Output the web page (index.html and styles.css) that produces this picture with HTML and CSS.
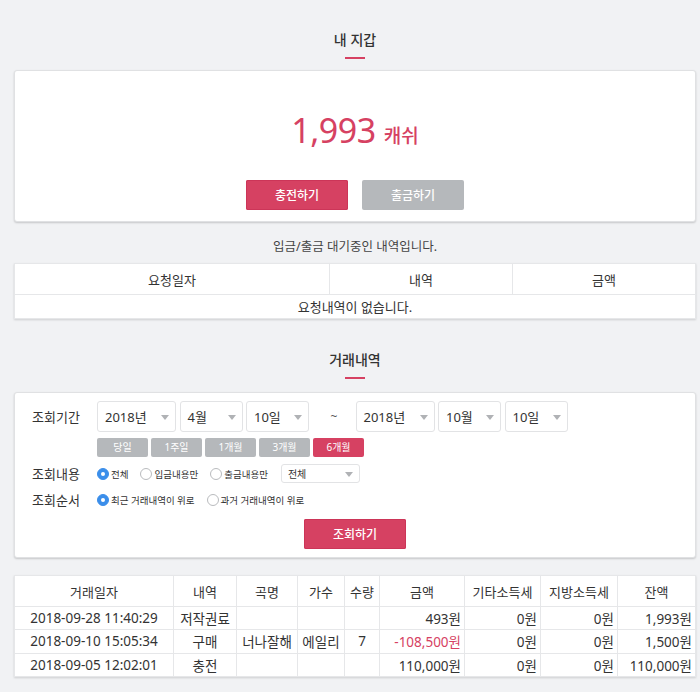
FILE: index.html
```html
<!DOCTYPE html>
<html lang="ko">
<head>
<meta charset="utf-8">
<title>내 지갑</title>
<link rel="stylesheet" href="styles.css">
</head>
<body>
<div class="page">
  <div class="sec-head first">
    <h2 class="sec-title">내 지갑</h2>
    <div class="sec-bar"></div>
  </div>
  <div class="card wallet">
    <div class="amount"><span class="num">1,993</span><span class="unit">캐쉬</span></div>
    <div class="btns">
      <button class="btn btn-pink">충전하기</button>
      <button class="btn btn-gray">출금하기</button>
    </div>
  </div>

  <p class="notice">입금/출금 대기중인 내역입니다.</p>
  <table class="tbl tbl-pending">
    <colgroup><col class="c-req"><col class="c-desc"><col></colgroup>
    <thead><tr><th>요청일자</th><th>내역</th><th>금액</th></tr></thead>
    <tbody><tr><td colspan="3">요청내역이 없습니다.</td></tr></tbody>
  </table>

  <div class="sec-head second">
    <h2 class="sec-title">거래내역</h2>
    <div class="sec-bar"></div>
  </div>
  <div class="card search">
    <div class="row row-period">
      <span class="lbl">조회기간</span>
      <div class="sel w79"><span>2018년</span><i class="caret"></i></div>
      <div class="sel w63"><span>4월</span><i class="caret"></i></div>
      <div class="sel w63"><span>10일</span><i class="caret"></i></div>
      <span class="tilde">~</span>
      <div class="sel w79"><span>2018년</span><i class="caret"></i></div>
      <div class="sel w63"><span>10월</span><i class="caret"></i></div>
      <div class="sel w63"><span>10일</span><i class="caret"></i></div>
    </div>
    <div class="row row-quick">
      <span class="qbtn">당일</span>
      <span class="qbtn">1주일</span>
      <span class="qbtn">1개월</span>
      <span class="qbtn">3개월</span>
      <span class="qbtn on">6개월</span>
    </div>
    <div class="row row-opt">
      <span class="lbl">조회내용</span>
      <label class="radio"><i class="dot on"></i>전체</label>
      <label class="radio"><i class="dot"></i>입금내용만</label>
      <label class="radio"><i class="dot"></i>출금내용만</label>
      <div class="sel sm w79"><span>전체</span><i class="caret"></i></div>
    </div>
    <div class="row row-opt">
      <span class="lbl">조회순서</span>
      <label class="radio"><i class="dot on"></i>최근 거래내역이 위로</label>
      <label class="radio"><i class="dot"></i>과거 거래내역이 위로</label>
    </div>
    <div class="row row-submit">
      <button class="btn btn-pink">조회하기</button>
    </div>
  </div>

  <table class="tbl tbl-hist">
    <colgroup>
      <col class="h1"><col class="h2"><col class="h3"><col class="h4"><col class="h5">
      <col class="h6"><col class="h7"><col class="h8"><col>
    </colgroup>
    <thead>
      <tr><th>거래일자</th><th>내역</th><th>곡명</th><th>가수</th><th>수량</th><th>금액</th><th>기타소득세</th><th>지방소득세</th><th>잔액</th></tr>
    </thead>
    <tbody>
      <tr><td>2018-09-28 11:40:29</td><td>저작권료</td><td></td><td></td><td></td><td class="r">493원</td><td class="r">0원</td><td class="r">0원</td><td class="r">1,993원</td></tr>
      <tr><td>2018-09-10 15:05:34</td><td>구매</td><td>너나잘해</td><td>에일리</td><td>7</td><td class="r neg">-108,500원</td><td class="r">0원</td><td class="r">0원</td><td class="r">1,500원</td></tr>
      <tr><td>2018-09-05 12:02:01</td><td>충전</td><td></td><td></td><td></td><td class="r">110,000원</td><td class="r">0원</td><td class="r">0원</td><td class="r">110,000원</td></tr>
    </tbody>
  </table>
</div>
</body>
</html>
```
FILE: styles.css
```css
* { box-sizing: border-box; }
html, body { margin: 0; padding: 0; }
body {
  background: #f1f2f4;
  font-family: "Noto Sans", "Noto Sans CJK KR", sans-serif;
  color: #333;
  font-size: 13px;
}
.page { margin: 0 4px 0 14px; padding-bottom: 20px; }

.sec-head { text-align: center; }
.sec-head.first { padding-top: 30px; }
.sec-head.second { padding-top: 31px; }
.sec-title {
  margin: 0;
  font-size: 14px;
  line-height: 20px;
  font-weight: 500;
  color: #333;
}
.sec-bar {
  width: 20px;
  height: 2px;
  background: #d64162;
  margin: 7px auto 11px;
}
.second .sec-bar { margin-bottom: 13px; }

.card {
  background: #fff;
  border: 1px solid #e0e1e3;
  border-radius: 3px;
  box-shadow: 0 1px 2px rgba(0,0,0,0.18);
}
.wallet { padding: 39px 0 11px; text-align: center; }
.amount {
  height: 40px;
  line-height: 40px;
  color: #d64162;
}
.amount .num { font-size: 34px; letter-spacing: -0.5px; }
.amount .unit { font-size: 19px; font-weight: 500; margin-left: 8px; }
.btns { margin-top: 30px; display: flex; justify-content: center; gap: 14px; }
.btn {
  width: 102px;
  height: 30px;
  border: 0;
  border-radius: 2px;
  color: #fff;
  font-family: inherit;
  font-size: 12px;
  font-weight: 500;
  padding: 0;
  cursor: pointer;
}
.btn-pink { background: #d64162; box-shadow: inset 0 0 0 1px #cc3558; }
.btn-gray { background: #b5b8bb; }

.notice {
  margin: 15px 0 6px;
  line-height: 20px;
  text-align: center;
  font-size: 12.5px;
  color: #444;
}

.tbl {
  width: 100%;
  border-collapse: collapse;
  background: #fff;
  box-shadow: 0 1px 2px rgba(0,0,0,0.15);
  table-layout: fixed;
}
.tbl th, .tbl td {
  border: 1px solid #e6e7e9;
  padding: 0 3px;
  text-align: center;
  font-weight: 400;
  white-space: nowrap;
  overflow: hidden;
}
.tbl th { height: 31px; font-size: 13px; color: #333; }
.tbl td { height: 23.3px; font-size: 13.5px; color: #333; }
.tbl-pending td { height: 24px; font-size: 13px; }
.c-req { width: 315px; }
.c-desc { width: 183px; }

.search { padding: 8px 17px 8px; }
.row { display: flex; align-items: center; }
.row-period { height: 31px; }
.lbl { width: 65px; font-size: 13px; color: #333; flex: none; }
.sel {
  position: relative;
  height: 31px;
  border: 1px solid #e2e3e5;
  border-radius: 3px;
  background: #fff;
  display: flex;
  align-items: center;
  padding-left: 7px;
  font-size: 13px;
  color: #333;
  margin-right: 3.5px;
  flex: none;
}
.w79 { width: 79px; }
.w63 { width: 63px; }
.caret {
  position: absolute;
  right: 6px;
  top: 50%;
  margin-top: -2px;
  width: 0; height: 0;
  border-left: 4px solid transparent;
  border-right: 4px solid transparent;
  border-top: 5px solid #b0b2b5;
}
.tilde { width: 43px; text-align: center; font-size: 12px; color: #555; flex: none; }
.row-quick { margin-top: 6px; height: 19px; padding-left: 65px; gap: 3px; }
.qbtn {
  width: 51px;
  height: 19px;
  line-height: 19px;
  border-radius: 2px;
  background: #b5b8bb;
  color: #fff;
  text-align: center;
  font-size: 10px;
}
.qbtn.on { background: #d64162; }
.row-opt { margin-top: 7px; height: 19px; }
.radio {
  display: flex;
  align-items: center;
  font-size: 9.5px;
  color: #333;
  margin-right: 12px;
}
.dot {
  width: 12px;
  height: 12px;
  border-radius: 50%;
  border: 1px solid #b9bbbe;
  background: #fff;
  margin-right: 2px;
  position: relative;
  flex: none;
}
.dot.on { background: #3b8eea; border-color: #3b8eea; }
.dot.on::after {
  content: "";
  position: absolute;
  left: 3px; top: 3px;
  width: 4px; height: 4px;
  border-radius: 50%;
  background: #fff;
}
.sel.sm { height: 19px; font-size: 10px; padding-left: 6px; margin-left: 1px; }
.row-submit { margin-top: 10px; justify-content: center; }

.tbl-hist { margin-top: 17px; }
.h1 { width: 159px; }
.h2 { width: 63px; }
.h3 { width: 61px; }
.h4 { width: 47px; }
.h5 { width: 35px; }
.h6 { width: 85px; }
.h7 { width: 76px; }
.h8 { width: 77px; }
.tbl td.r { text-align: right; }
.tbl td.neg { color: #d64162; }
```
